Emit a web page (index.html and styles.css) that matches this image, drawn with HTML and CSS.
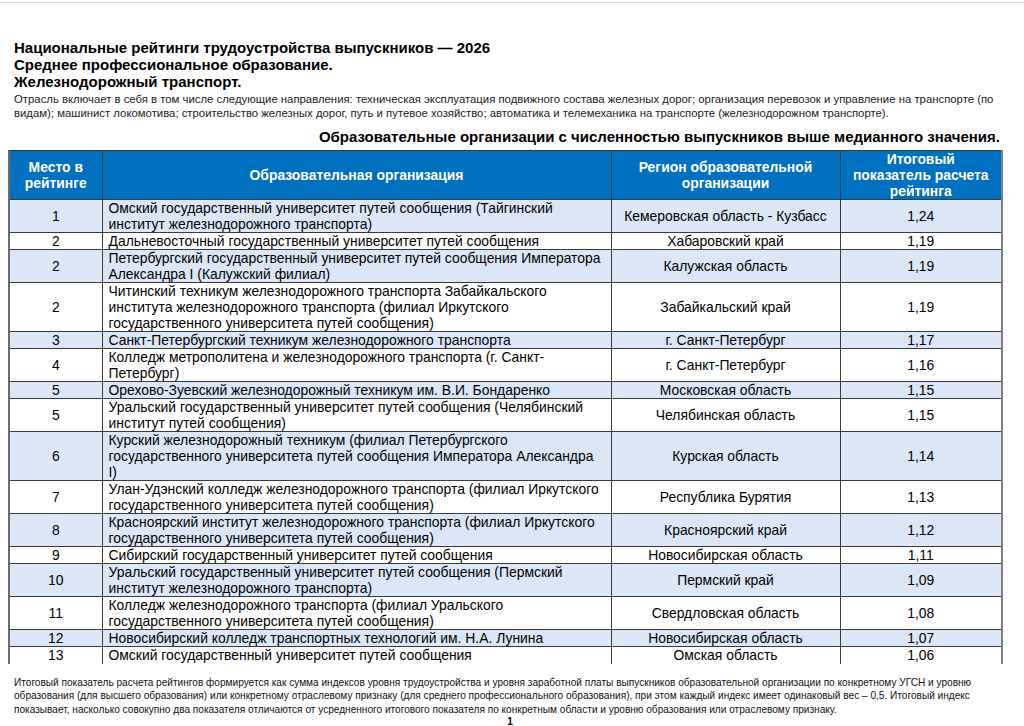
FILE: index.html
```html
<!DOCTYPE html>
<html lang="ru">
<head>
<meta charset="utf-8">
<title>Национальные рейтинги трудоустройства выпускников — 2026</title>
<link rel="stylesheet" href="styles.css">
</head>
<body>
<div class="page">
  <div class="topline"></div>
  <header class="head">
    <h1 class="title">Национальные рейтинги трудоустройства выпускников — 2026<br>Среднее профессиональное образование.<br>Железнодорожный транспорт.</h1>
    <p class="lead">Отрасль включает в себя в том числе следующие направления: техническая эксплуатация подвижного состава железных дорог; организация перевозок и управление на транспорте (по видам); машинист локомотива; строительство железных дорог, путь и путевое хозяйство; автоматика и телемеханика на транспорте (железнодорожном транспорте).</p>
    <h2 class="subtitle">Образовательные организации с численностью выпускников выше медианного значения.</h2>
  </header>
  <table class="rating">
    <colgroup>
      <col class="c-place"><col class="c-org"><col class="c-region"><col class="c-score">
    </colgroup>
    <thead>
      <tr><th>Место в<br>рейтинге</th><th>Образовательная организация</th><th>Регион образовательной<br>организации</th><th>Итоговый<br>показатель расчета<br>рейтинга</th></tr>
    </thead>
    <tbody>
      <tr><td>1</td><td>Омский государственный университет путей сообщения (Тайгинский институт железнодорожного транспорта)</td><td>Кемеровская область - Кузбасс</td><td>1,24</td></tr>
      <tr><td>2</td><td>Дальневосточный государственный университет путей сообщения</td><td>Хабаровский край</td><td>1,19</td></tr>
      <tr><td>2</td><td>Петербургский государственный университет путей сообщения Императора Александра I (Калужский филиал)</td><td>Калужская область</td><td>1,19</td></tr>
      <tr><td>2</td><td>Читинский техникум железнодорожного транспорта Забайкальского института железнодорожного транспорта (филиал Иркутского государственного университета путей сообщения)</td><td>Забайкальский край</td><td>1,19</td></tr>
      <tr><td>3</td><td>Санкт-Петербургский техникум железнодорожного транспорта</td><td>г. Санкт-Петербург</td><td>1,17</td></tr>
      <tr><td>4</td><td>Колледж метрополитена и железнодорожного транспорта (г. Санкт-Петербург)</td><td>г. Санкт-Петербург</td><td>1,16</td></tr>
      <tr><td>5</td><td>Орехово-Зуевский железнодорожный техникум им. В.И. Бондаренко</td><td>Московская область</td><td>1,15</td></tr>
      <tr><td>5</td><td>Уральский государственный университет путей сообщения (Челябинский институт путей сообщения)</td><td>Челябинская область</td><td>1,15</td></tr>
      <tr><td>6</td><td>Курский железнодорожный техникум (филиал Петербургского государственного университета путей сообщения Императора Александра I)</td><td>Курская область</td><td>1,14</td></tr>
      <tr><td>7</td><td>Улан-Удэнский колледж железнодорожного транспорта (филиал Иркутского государственного университета путей сообщения)</td><td>Республика Бурятия</td><td>1,13</td></tr>
      <tr><td>8</td><td>Красноярский институт железнодорожного транспорта (филиал Иркутского государственного университета путей сообщения)</td><td>Красноярский край</td><td>1,12</td></tr>
      <tr><td>9</td><td>Сибирский государственный университет путей сообщения</td><td>Новосибирская область</td><td>1,11</td></tr>
      <tr><td>10</td><td>Уральский государственный университет путей сообщения (Пермский институт железнодорожного транспорта)</td><td>Пермский край</td><td>1,09</td></tr>
      <tr><td>11</td><td>Колледж железнодорожного транспорта (филиал Уральского государственного университета путей сообщения)</td><td>Свердловская область</td><td>1,08</td></tr>
      <tr><td>12</td><td>Новосибирский колледж транспортных технологий им. Н.А. Лунина</td><td>Новосибирская область</td><td>1,07</td></tr>
      <tr><td>13</td><td>Омский государственный университет путей сообщения</td><td>Омская область</td><td>1,06</td></tr>
    </tbody>
  </table>
  <p class="note">Итоговый показатель расчета рейтингов формируется как сумма индексов уровня трудоустройства и уровня заработной платы выпускников образовательной организации по конкретному УГСН и уровню образования (для высшего образования) или конкретному отраслевому признаку (для среднего профессионального образования), при этом каждый индекс имеет одинаковый вес – 0,5. Итоговый индекс показывает, насколько совокупно два показателя отличаются от усредненного итогового показателя по конкретным области и уровню образования или отраслевому признаку.</p>
  <div class="pagenum">1</div>
</div>
</body>
</html>
```
FILE: styles.css
```css
html, body {
  margin: 0;
  padding: 0;
  background: #ffffff;
}
body {
  font-family: "Liberation Sans", Arial, sans-serif;
  color: #000;
  overflow: hidden;
}
.page {
  width: 1024px;
  height: 726px;
  overflow: hidden;
}
.topline {
  height: 1px;
  margin-top: 2px;
  background: #d9d9d9;
}
.head {
  padding: 36px 24px 0 14px;
}
.title {
  margin: 0;
  font-size: 15px;
  line-height: 17px;
  font-weight: bold;
}
.lead {
  margin: 2px 0 0;
  width: 988px;
  font-size: 11.35px;
  line-height: 14px;
  color: #222;
}
.subtitle {
  margin: 0;
  padding-top: 8px;
  text-align: right;
  font-size: 15px;
  line-height: 17px;
  font-weight: bold;
}
.rating {
  margin: 5px 0 0 8px;
  width: 993px;
  border-collapse: collapse;
  table-layout: fixed;
  font-size: 13.9px;
  line-height: 16px;
}
.c-place { width: 93px; }
.c-org { width: 509px; }
.c-region { width: 229px; }
.c-score { width: 162px; }
.rating th {
  background: #0070c0;
  color: #fff;
  font-size: 13.9px;
  font-weight: bold;
  line-height: 16px;
  padding: 0 4px;
  border: 1px solid #3a3a3a;
  text-align: center;
  vertical-align: middle;
}
.rating td {
  padding: 0 4px;
  border: 1px solid #3a3a3a;
  text-align: center;
  vertical-align: middle;
}
.rating td:nth-child(2) {
  text-align: left;
  padding-left: 6px;
  padding-right: 8px;
}
.rating th:first-child,
.rating td:first-child {
  border-left: 2px solid #6b6b6b;
}
.rating th:last-child,
.rating td:last-child {
  border-right: 2px solid #7d7d7d;
}
.rating tbody tr:nth-child(odd) {
  background: #dbe6f7;
}
.rating tbody tr:last-child td {
  border-bottom: none;
  padding-bottom: 1px;
}
.note {
  margin: 12px 0 0 14px;
  width: 975px;
  font-size: 10.1px;
  line-height: 13.4px;
  color: #111;
}
.pagenum {
  margin-top: 0;
  text-align: center;
  padding-right: 4px;
  font-size: 10px;
  font-weight: bold;
  line-height: 11px;
}
```
